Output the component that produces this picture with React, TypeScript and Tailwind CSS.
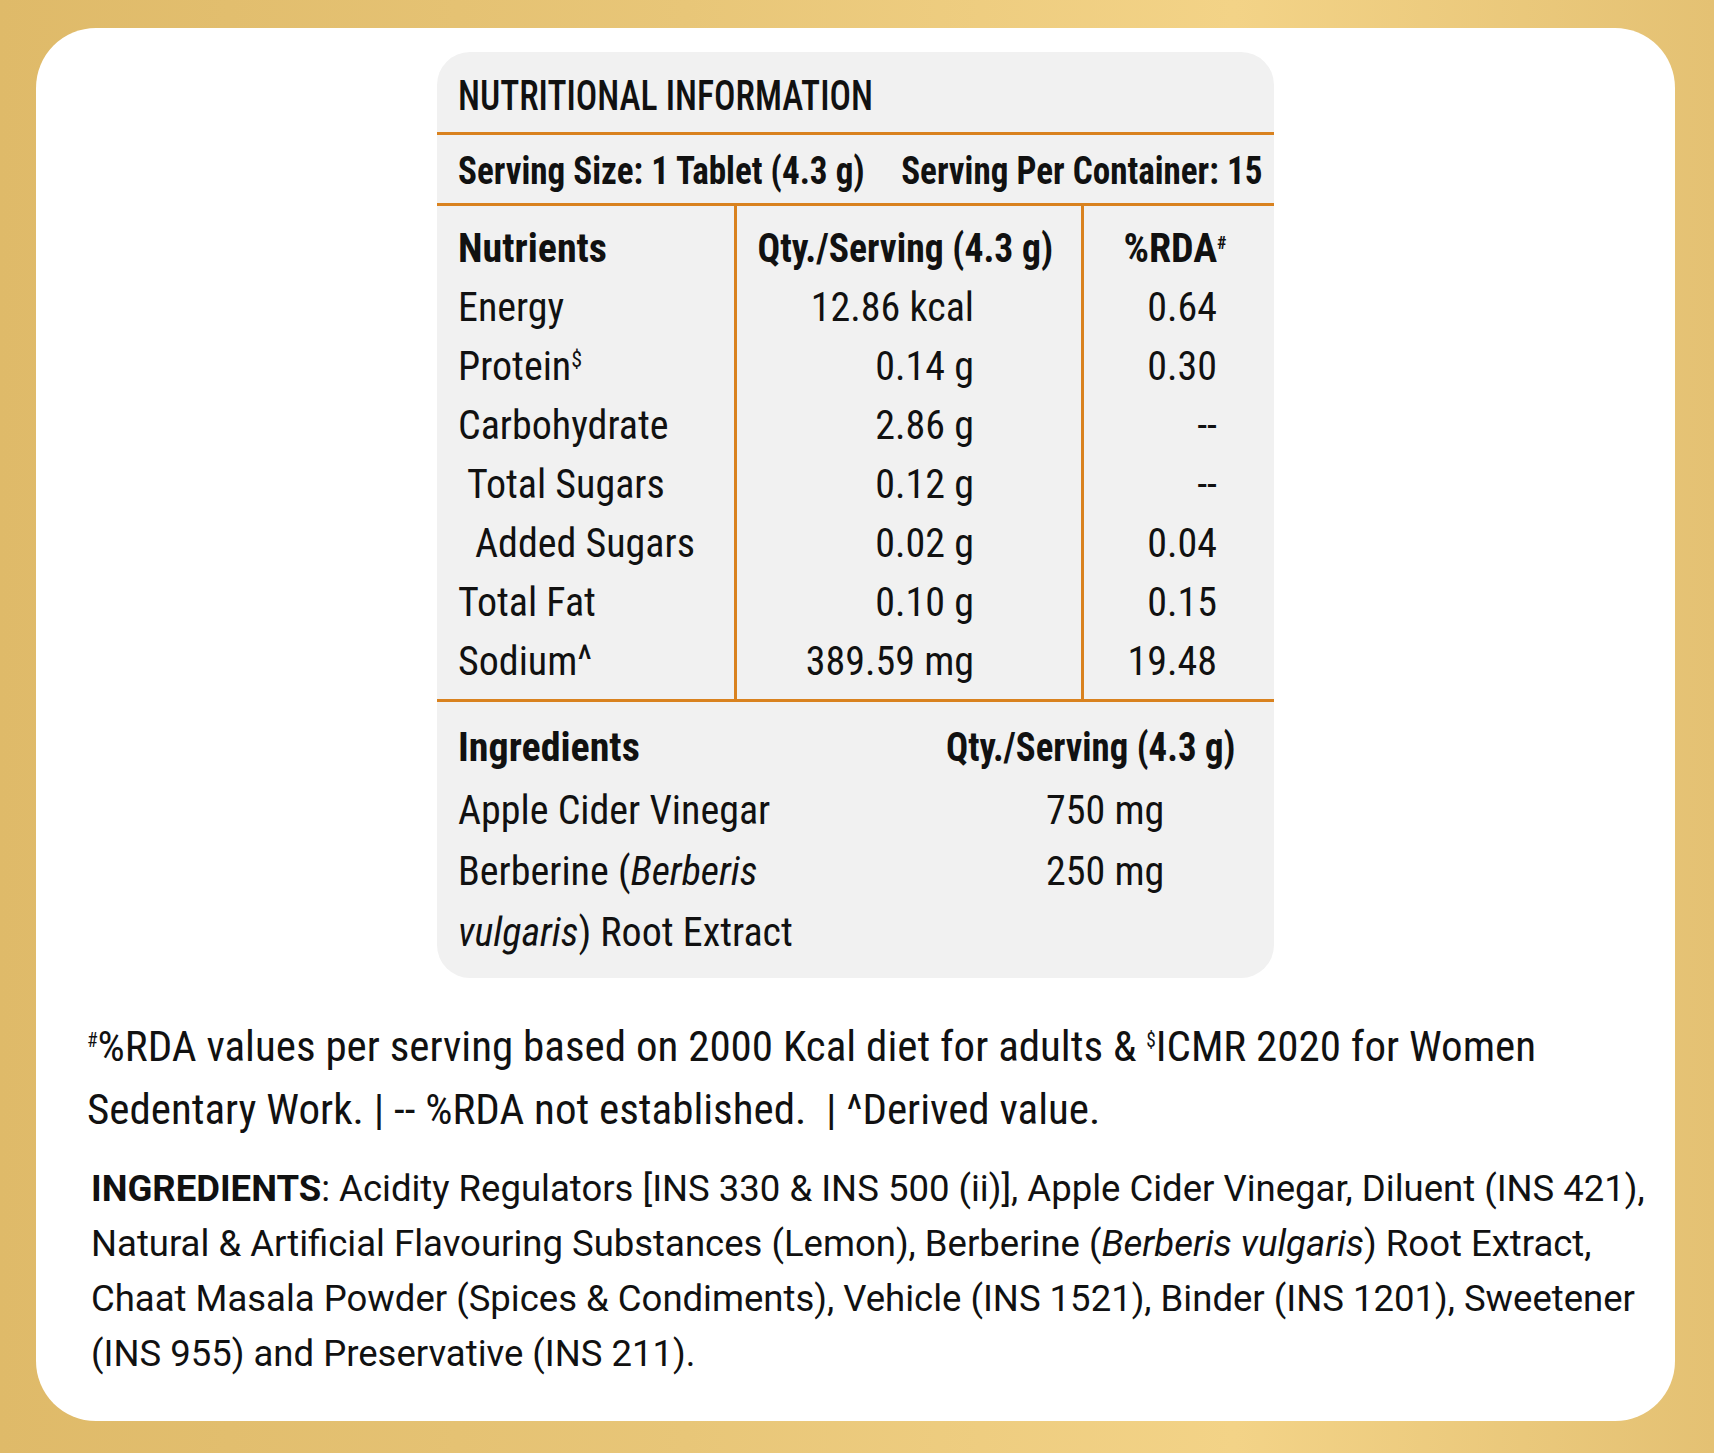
const nutrients = [
  { name: 'Energy', qty: '12.86 kcal', rda: '0.64', indent: '' },
  { name: 'Protein', sup: '$', qty: '0.14 g', rda: '0.30', indent: '' },
  { name: 'Carbohydrate', qty: '2.86 g', rda: '--', indent: '' },
  { name: 'Total Sugars', qty: '0.12 g', rda: '--', indent: 'pl-[9px]' },
  { name: 'Added Sugars', qty: '0.02 g', rda: '0.04', indent: 'pl-[17px]' },
  { name: 'Total Fat', qty: '0.10 g', rda: '0.15', indent: '' },
  { name: 'Sodium', caret: true, qty: '389.59 mg', rda: '19.48', indent: '' },
];

function Sup({ children, big }: { children: React.ReactNode; big?: boolean }) {
  return (
    <span className={`relative leading-none align-baseline ${big ? 'top-[-0.6em] text-[0.55em]' : 'top-[-0.75em] text-[0.45em]'}`}>
      {children}
    </span>
  );
}

const NW = 'inline-block whitespace-nowrap';

export default function App() {
  return (
    <div className="w-[1714px] h-[1453px] pt-[28px] pl-[36px] pr-[39px] pb-[32px] bg-[linear-gradient(90deg,#dfba69_0%,#e8c678_40%,#f3d387_72%,#e4c173_100%)] text-[#111] font-['Roboto_Condensed',Roboto,sans-serif]">
      <div className="h-full bg-white rounded-[60px] flex flex-col">
        {/* Nutrition panel */}
        <div className="ml-[401px] mt-[24px] w-[837px] rounded-[33px] bg-[#f1f1f1] overflow-hidden">
          <div className="h-[80px] px-[21px] flex items-center pt-[7px] text-[43px] font-medium">
            <span className={`${NW} origin-left scale-x-[0.83]`}>NUTRITIONAL INFORMATION</span>
          </div>
          <div className="h-[3px] bg-[#d9821f]" />
          <div className="h-[68px] pl-[21px] pr-[12px] pt-[5px] flex items-center text-[39px] font-bold">
            <div className="flex-1 min-w-0">
              <span className={`${NW} origin-left scale-x-[0.9]`}>Serving Size: 1 Tablet (4.3 g)</span>
            </div>
            <span className={`${NW} shrink-0 origin-right scale-x-[0.9]`}>Serving Per Container: 15</span>
          </div>
          <div className="h-[3px] bg-[#d9821f]" />

          <div className="flex h-[493px] text-[40px] leading-[59px]">
            <div className="w-[300px] border-r-[3px] border-[#d9821f] pl-[21px] pt-[13px]">
              <div className="font-bold">Nutrients</div>
              {nutrients.map(n => (
                <div key={n.name} className={`${n.indent} whitespace-nowrap`}>
                  {n.name}
                  {n.sup && <Sup big>{n.sup}</Sup>}
                  {n.caret && <span className="relative top-[-0.02em] leading-none">^</span>}
                </div>
              ))}
            </div>
            <div className="w-[347px] border-r-[3px] border-[#d9821f] pt-[13px]">
              <div className="text-center pr-[8px]">
                <span className={`${NW} origin-center scale-x-[0.94] font-bold`}>Qty./Serving (4.3 g)</span>
              </div>
              {nutrients.map(n => (
                <div key={n.name} className="text-right pr-[107px] whitespace-nowrap">
                  {n.qty}
                </div>
              ))}
            </div>
            <div className="flex-1 pt-[13px]">
              <div className="text-center pr-[8px] font-bold whitespace-nowrap">
                %RDA<Sup>#</Sup>
              </div>
              {nutrients.map(n => (
                <div key={n.name} className="text-right pr-[57px] whitespace-nowrap">
                  {n.rda}
                </div>
              ))}
            </div>
          </div>

          <div className="h-[3px] bg-[#d9821f]" />

          <div className="pt-[14px] pb-[15px] pl-[21px] text-[40px] whitespace-nowrap">
            <div className="flex h-[64px] items-center font-bold">
              <span className="w-[488px]">Ingredients</span>
              <span className={`${NW} origin-left scale-x-[0.92]`}>Qty./Serving (4.3 g)</span>
            </div>
            <div className="flex h-[61px] items-center">
              <span className="w-[588px]">Apple Cider Vinegar</span>
              <span>750 mg</span>
            </div>
            <div className="flex h-[61px] items-center">
              <span className="w-[588px]">
                Berberine (<i>Berberis</i>
              </span>
              <span>250 mg</span>
            </div>
            <div className="flex h-[61px] items-center">
              <span>
                <i>vulgaris</i>) Root Extract
              </span>
            </div>
          </div>
        </div>

        {/* Footnote */}
        <p className="mt-[37px] pl-[51px] text-[43px] leading-[63px] whitespace-nowrap">
          <Sup>#</Sup>%RDA values per serving based on 2000 Kcal diet for adults &amp; <Sup>$</Sup>ICMR 2020 for Women
          <br />
          Sedentary Work. | -- %RDA not established.&nbsp; | ^Derived value.
        </p>

        {/* Ingredients list */}
        <p className="mt-[20px] pl-[55px] text-[36.5px] leading-[55px] whitespace-nowrap font-['Roboto',sans-serif]">
          <span className="font-bold">INGREDIENTS</span>: Acidity Regulators [INS 330 &amp; INS 500 (ii)], Apple Cider Vinegar, Diluent (INS 421),
          <br />
          Natural &amp; Artificial Flavouring Substances (Lemon), Berberine (<i>Berberis vulgaris</i>) Root Extract,
          <br />
          Chaat Masala Powder (Spices &amp; Condiments), Vehicle (INS 1521), Binder (INS 1201), Sweetener
          <br />
          (INS 955) and Preservative (INS 211).
        </p>
      </div>
    </div>
  );
}
